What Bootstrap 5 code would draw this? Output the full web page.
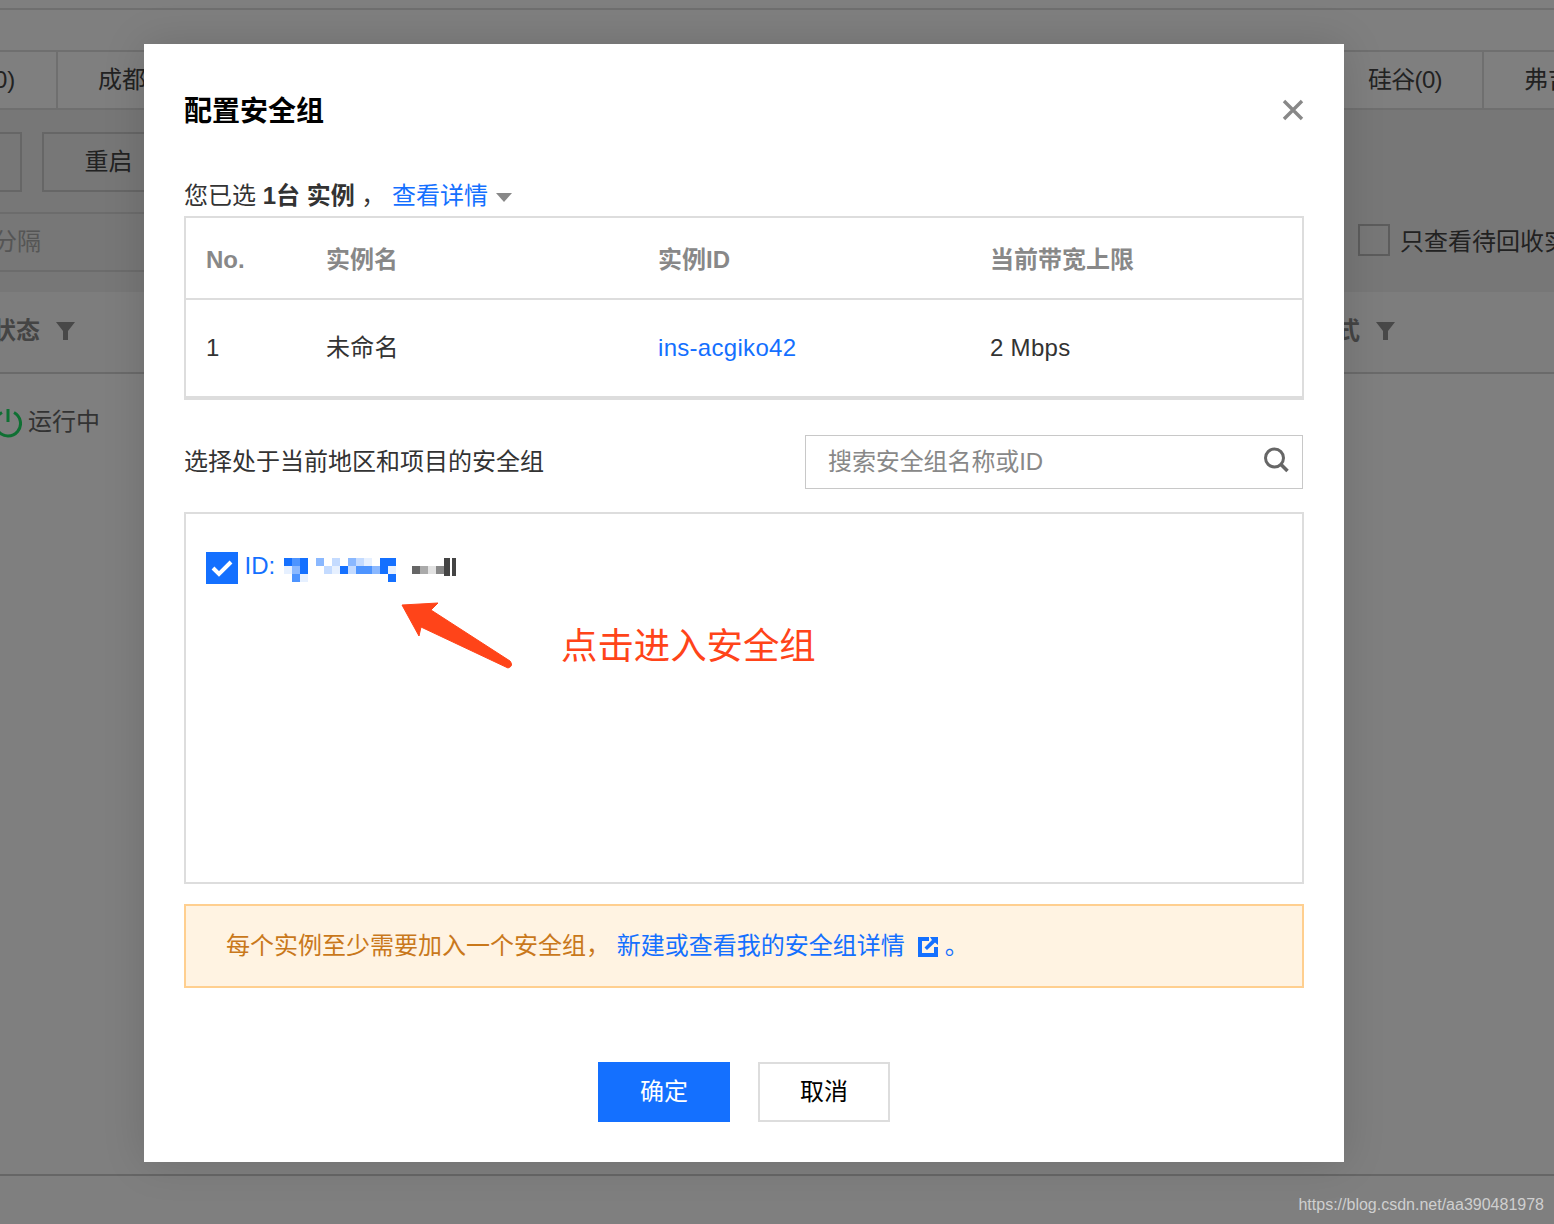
<!doctype html>
<html lang="zh">
<head>
<meta charset="utf-8">
<title>配置安全组</title>
<link rel="stylesheet" href="https://cdn.jsdelivr.net/npm/bootstrap@5.3.0/dist/css/bootstrap.min.css">
<style>
html,body{height:1224px;overflow:hidden}
body{background:#7f7f7f;font-family:"Liberation Sans","Noto Sans CJK SC",sans-serif;font-size:24px;color:#333;position:relative}
.pg-top{height:10px;border-bottom:2px solid #6f6f6f}
.pg-tabs{margin-top:40px;height:60px;border-top:2px solid #6f6f6f;border-bottom:2px solid #6f6f6f;color:#222}
.pg-tab{height:56px;line-height:56px;white-space:nowrap;overflow:hidden;border-right:2px solid #6f6f6f;padding:0 40px}
.pg-tab-a{width:58px;padding:0;text-align:left;text-indent:-14px}
.pg-tab-b{width:1286px}
.pg-tab-c{width:140px;padding:0 0 0 24px;letter-spacing:-.7px}
.pg-tab-d{border:0;padding:0 0 0 40px;flex:1}
.pg-zone{background:#777;height:182px;position:relative}
.pg-btns{padding-top:22px;height:82px}
.pg-btn{height:60px;line-height:56px;border:2px solid #666;color:#222;text-align:center;white-space:nowrap}
.pg-btn-a{width:22px;border-left:0;margin-right:20px}
.pg-btn-b{width:133px}
.pg-filter{padding-top:20px;height:80px;align-items:flex-start}
.pg-input{width:150px;height:60px;line-height:56px;border:2px solid #6c6c6c;border-left:0;color:#555;white-space:nowrap;text-indent:-7px;overflow:hidden}
.pg-check{width:32px;height:32px;border:2px solid #5c5c5c;margin-top:12px;margin-right:10px;flex:none}
.pg-checkrow{margin-left:1208px;white-space:nowrap;color:#222;line-height:60px;height:60px;overflow:hidden;width:196px}
.pg-head{height:82px;border-bottom:2px solid #6a6a6a;font-weight:700;color:#444;background:#7d7d7d;padding-bottom:2px}
.pg-row{height:96px;color:#333;font-size:24px}
.pg-power{margin-left:-6px;flex:none;margin-right:6px}
.pg-foot{position:absolute;left:0;right:0;top:1174px;height:2px;background:#666}
.pg-mark{position:absolute;right:10px;top:1195px;font-size:16px;color:#cfcfcf;line-height:20px}
.dlg{position:absolute;left:144px;top:44px;width:1200px;height:1118px;background:#fff;padding:0 40px;box-shadow:0 0 40px rgba(0,0,0,.14)}
.dlg-title{height:133px;padding-top:46px;font-size:28px;line-height:44px;font-weight:700;color:#000;position:relative}
.dlg-close{position:absolute;right:0;top:55px;width:22px;height:22px}
.dlg-sel{height:39px;line-height:38px;white-space:nowrap}
.dlg-sel a{color:#1470ff;text-decoration:none}
.dlg-caret{display:inline-block;width:0;height:0;border:8px solid transparent;border-top:9px solid #888;border-bottom:0;margin-left:8px;vertical-align:2px}
.ins-wrap{border:2px solid #ddd;border-bottom-width:4px;height:184px}
.ins-table{table-layout:fixed;margin:0;width:100%;font-size:24px;color:#333;--bs-table-bg:transparent}
.ins-table th,.ins-table td{padding:0 0 0 20px;vertical-align:middle;box-shadow:none}
.ins-table th{height:81px;color:#888;font-weight:700;border-bottom:2px solid #ddd;padding-top:3px}
.ins-table td{height:96px;border-bottom:0;letter-spacing:.3px}
.ins-table a{color:#1470ff;text-decoration:none}
.grp-row{margin-top:35px;height:54px;margin-bottom:23px}
.grp-search{width:498px;height:54px;border:1.5px solid #c8c8c8;padding:0 22px;color:#888;line-height:51px;position:relative;margin-right:1px;letter-spacing:-.1px}
.grp-search svg{position:absolute;right:12px;top:10px}
.grp-box{border:2px solid #ddd;height:372px;position:relative}
.grp-item{position:absolute;left:20px;top:38px;display:flex;align-items:flex-start;line-height:28px}
.grp-tick{width:32px;height:32px;background:#1470ff;margin-right:7px;flex:none;display:flex;align-items:center;justify-content:center}
.grp-id{color:#1470ff;line-height:28px;margin-left:-.5px}
.grp-blur{position:absolute;left:98px;top:44px}
.grp-arrow{position:absolute;left:0;top:0;pointer-events:none}
.grp-note{position:absolute;left:375px;top:109px;font-size:36.4px;line-height:48px;color:#ff4419;white-space:nowrap}
.tip-bar{margin-top:20px;height:84px;background:#fff3e2;border:2px solid #ffcf8f;padding-left:40px;line-height:80px;color:#c9781b;white-space:nowrap}
.tip-bar a{color:#1470ff;text-decoration:none}
.tip-ext{display:inline-block;vertical-align:-3px;margin:0 7px 0 13px}
.dlg-actions{margin-top:74px;gap:28px;padding-right:0}
.act-btn{width:132px;height:60px;border-radius:0;font-size:24px;padding:0;line-height:56px}
.act-ok{background:#1470ff;border:2px solid #1470ff;color:#fff}
.act-no{background:#fff;border:2px solid #ddd;color:#000}
</style>
</head>
<body>
<div class="pg-top"></div>
<div class="pg-tabs d-flex">
  <div class="pg-tab pg-tab-a">(0)</div>
  <div class="pg-tab pg-tab-b">成都(0)</div>
  <div class="pg-tab pg-tab-c">硅谷(0)</div>
  <div class="pg-tab pg-tab-d">弗吉尼亚(0)</div>
</div>
<div class="pg-zone">
  <div class="pg-btns d-flex">
    <div class="pg-btn pg-btn-a"></div>
    <div class="pg-btn pg-btn-b">重启</div>
  </div>
  <div class="pg-filter d-flex">
    <div class="pg-input">分隔</div>
    <div class="pg-checkrow d-flex"><span class="pg-check"></span>只查看待回收实例</div>
  </div>
</div>
<div class="pg-head d-flex">
  <div class="d-flex align-items-center" style="margin-left:-8px;width:1344px">状态
    <svg class="ms-3" width="20" height="20" viewBox="0 0 20 20"><path d="M0 1h19L12 10v9H7v-9z" fill="#484848"/></svg>
  </div>
  <div class="d-flex align-items-center">式
    <svg class="ms-3" width="20" height="20" viewBox="0 0 20 20"><path d="M0 1h19L12 10v9H7v-9z" fill="#484848"/></svg>
  </div>
</div>
<div class="pg-row d-flex align-items-center">
  <svg class="pg-power" width="28" height="32" viewBox="0 0 28 32"><path d="M8 6.500a12.500 12.500 0 1 0 12 0M14 3v13" fill="none" stroke="#0f7033" stroke-width="3"/></svg>
  <span>运行中</span>
</div>
<div class="pg-foot"></div>
<div class="pg-mark">https://blog.csdn.net/aa390481978</div>

<div class="dlg">
  <div class="dlg-title">配置安全组
    <svg class="dlg-close" viewBox="0 0 22 22"><path d="M2 2l18 18M20 2L2 20" stroke="#888" stroke-width="3.4" fill="none"/></svg>
  </div>
  <div class="dlg-sel">您已选 <b>1台 实例</b> ，&nbsp;<a href="#">查看详情</a><span class="dlg-caret"></span></div>
  <div class="ins-wrap">
    <table class="table ins-table">
      <colgroup><col style="width:120px"><col style="width:332px"><col style="width:332px"><col></colgroup>
      <thead><tr><th>No.</th><th>实例名</th><th>实例ID</th><th>当前带宽上限</th></tr></thead>
      <tbody><tr><td>1</td><td>未命名</td><td><a href="#">ins-acgiko42</a></td><td>2 Mbps</td></tr></tbody>
    </table>
  </div>
  <div class="grp-row d-flex justify-content-between align-items-center">
    <div>选择处于当前地区和项目的安全组</div>
    <div class="grp-search">搜索安全组名称或ID
      <svg width="28" height="28" viewBox="0 0 28 28"><circle cx="12.500" cy="12" r="9" fill="none" stroke="#666" stroke-width="3"/><path d="M19 18.500L25.500 25" stroke="#666" stroke-width="3.600"/></svg>
    </div>
  </div>
  <div class="grp-box">
    <div class="grp-item">
      <span class="grp-tick"><svg width="22" height="18" viewBox="0 0 22 18"><path d="M2 9l6 6L20 3" fill="none" stroke="#fff" stroke-width="4"/></svg></span>
      <span class="grp-id">ID:</span>
    </div>
    <svg class="grp-blur" width="176" height="26" viewBox="0 0 176 26" shape-rendering="crispEdges">
      <g fill="#1470ff">
        <rect x="0" y="0" width="8" height="8"/><rect x="16" y="0" width="8" height="8"/><rect x="96" y="0" width="16" height="8"/>
        <rect x="16" y="8" width="8" height="8"/><rect x="56" y="8" width="8" height="8"/><rect x="96" y="8" width="8" height="8"/>
        <rect x="104" y="16" width="8" height="8"/>
      </g>
      <g fill="#4d94ff"><rect x="8" y="0" width="8" height="8"/><rect x="72" y="8" width="16" height="8"/><rect x="8" y="16" width="8" height="8"/></g>
      <g fill="#8ab8ff"><rect x="32" y="0" width="8" height="8"/><rect x="64" y="0" width="8" height="8"/><rect x="88" y="8" width="8" height="8"/><rect x="8" y="8" width="8" height="8"/></g>
      <g fill="#c4dbff"><rect x="48" y="0" width="8" height="8"/><rect x="72" y="0" width="8" height="8"/><rect x="40" y="8" width="8" height="8"/><rect x="64" y="8" width="8" height="8"/></g>
      <g fill="#e6f0ff"><rect x="80" y="0" width="8" height="8"/><rect x="48" y="8" width="8" height="8"/><rect x="0" y="8" width="8" height="8"/><rect x="104" y="8" width="8" height="8"/><rect x="16" y="16" width="8" height="8"/></g>
      <rect x="128" y="8" width="8" height="8" fill="#666"/><rect x="136" y="8" width="8" height="8" fill="#aaa"/><rect x="144" y="8" width="8" height="8" fill="#e2e2e2"/><rect x="152" y="8" width="8" height="8" fill="#888"/>
      <rect x="160" y="0" width="6" height="18" fill="#444"/><rect x="168" y="0" width="4" height="18" fill="#444"/>
    </svg>
    <svg class="grp-arrow" width="1116" height="368" viewBox="0 0 1116 368"><path d="M216 91L252 89L245 96L324 147Q328 152 322 154L235 113L233 122Z" fill="#ff4419" stroke="#ff4419" stroke-width="1" stroke-linejoin="round"/></svg>
    <div class="grp-note">点击进入安全组</div>
  </div>
  <div class="tip-bar">每个实例至少需要加入一个安全组，&nbsp;<a href="#">新建或查看我的安全组详情</a><svg class="tip-ext" width="20" height="20" viewBox="0 0 20 20"><path fill="#1470ff" d="M0 0h11v4H4v12h12V10h4v10H0z"/><path fill="#1470ff" d="M12 0h8v8l-3-2.5L9 13 6.500 10.500 14 3z"/></svg><a href="#">。</a></div>
  <div class="dlg-actions d-flex justify-content-center">
    <button type="button" class="btn act-btn act-ok">确定</button>
    <button type="button" class="btn act-btn act-no">取消</button>
  </div>
</div>
<script src="https://cdn.jsdelivr.net/npm/bootstrap@5.3.0/dist/js/bootstrap.bundle.min.js"></script>
</body>
</html>
